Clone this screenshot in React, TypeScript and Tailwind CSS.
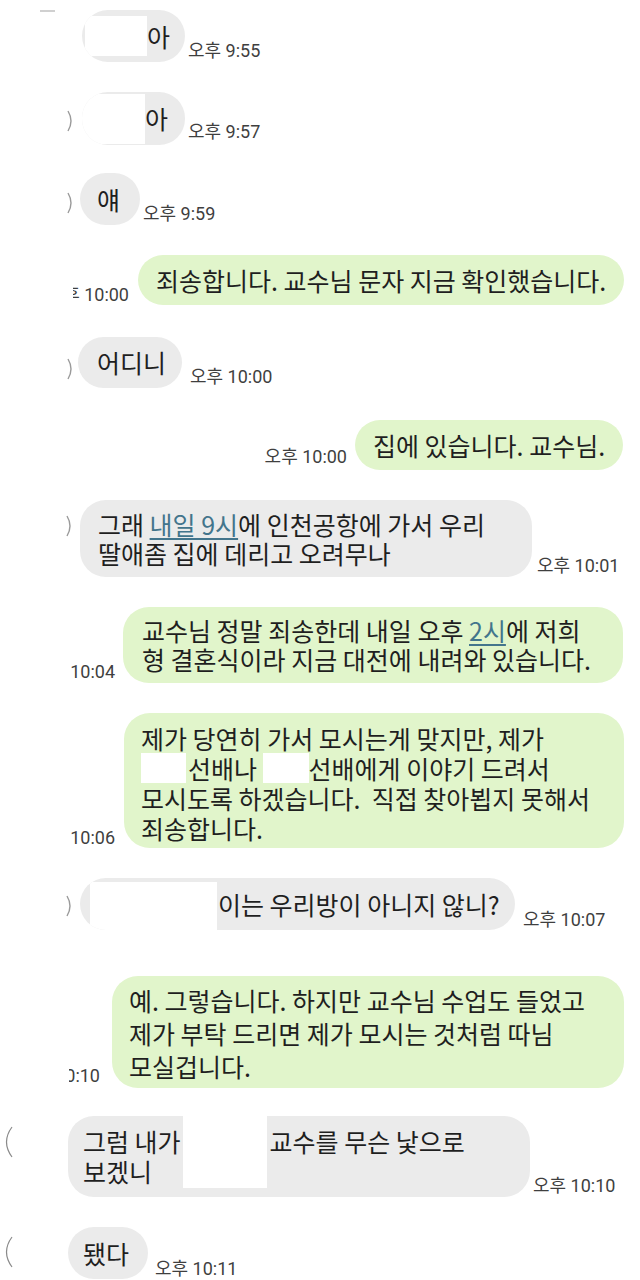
import React from 'react';

// small arc left over from the cropped avatar circles
function Paren({ open = false, className = '' }: { open?: boolean; className?: string }) {
  if (open) {
    return (
      <svg width="12" height="32" viewBox="0 0 12 32" className={className}>
        <path d="M10 1 Q-1 16 10 31" fill="none" stroke="#8a8a8a" strokeWidth="1.2" />
      </svg>
    );
  }
  return (
    <svg width="8" height="22" viewBox="0 0 8 22" className={className}>
      <path d="M2 1 Q8 11 2 21" fill="none" stroke="#9a9a9a" strokeWidth="1.4" />
    </svg>
  );
}

function Time({ children, className = '' }: { children: React.ReactNode; className?: string }) {
  return (
    <span
      className={
        "whitespace-nowrap text-[18px] leading-[20px] text-[#3f3f3f] font-['Roboto','Noto_Sans_CJK_KR',sans-serif] " +
        className
      }
    >
      {children}
    </span>
  );
}

// time stamp cut off by the left edge of the screenshot
function ClippedTime({ children, className = '' }: { children: React.ReactNode; className?: string }) {
  return (
    <span className={'flex justify-end overflow-hidden ' + className}>
      <Time>{children}</Time>
    </span>
  );
}

function Link({ children }: { children: React.ReactNode }) {
  return <span className="text-[#43758c] underline underline-offset-[3px] decoration-[1.5px]">{children}</span>;
}

export default function App() {
  return (
    <div className="w-[640px] h-[1280px] overflow-hidden bg-white text-[#1f1f1f] font-['Noto_Sans_CJK_KR',sans-serif]">
      {/* 9:55 */}
      <div className="flex items-end pt-[10px] pl-[40px]">
        <span className="self-start w-[15px] h-[2px] bg-[#d0d0d0]" />
        <div className="ml-[27px] flex items-center h-[52px] w-[103px] pl-[3px] rounded-[26px] bg-[#ebebeb] overflow-hidden">
          <span className="w-[62px] h-[40px] bg-white" />
          <span className="text-[25px] leading-[29px]">아</span>
        </div>
        <Time className="ml-[3px] mb-[1px]">오후 9:55</Time>
      </div>

      {/* 9:57 */}
      <div className="flex items-end mt-[30px] pl-[66px]">
        <Paren className="self-start mt-[18px]" />
        <div className="ml-[8px] flex items-center h-[53px] w-[103px] rounded-[26px] bg-[#ebebeb] overflow-hidden">
          <span className="w-[63px] h-[50px] bg-white" />
          <span className="text-[25px] leading-[29px]">아</span>
        </div>
        <Time className="ml-[3px] mb-[3px]">오후 9:57</Time>
      </div>

      {/* 9:59 */}
      <div className="flex items-end mt-[28px] pl-[66px]">
        <Paren className="self-start mt-[19px]" />
        <div className="ml-[6px] flex items-center h-[52px] w-[60px] pl-[17px] rounded-[26px] bg-[#ebebeb]">
          <span className="text-[25px] leading-[29px]">얘</span>
        </div>
        <Time className="ml-[3px] mb-[1px]">오후 9:59</Time>
      </div>

      {/* 10:00 sent */}
      <div className="flex items-end justify-end mt-[30px] pr-[16px]">
        <ClippedTime className="w-[56px] mr-[9px]">오후 10:00</ClippedTime>
        <div className="flex items-center h-[50px] w-[486px] pl-[18px] rounded-[25px] bg-[#e1f5cb]">
          <span className="whitespace-nowrap text-[25px] leading-[29px]">죄송합니다. 교수님 문자 지금 확인했습니다.</span>
        </div>
      </div>

      {/* 10:00 received */}
      <div className="flex items-end mt-[32px] pl-[66px]">
        <Paren className="self-start mt-[21px]" />
        <div className="ml-[4px] flex items-center h-[51px] w-[104px] pl-[19px] rounded-[26px] bg-[#ebebeb]">
          <span className="whitespace-nowrap text-[25px] leading-[29px]">어디니</span>
        </div>
        <Time className="ml-[8px] mb-[1px]">오후 10:00</Time>
      </div>

      {/* 10:00 sent */}
      <div className="flex items-end justify-end mt-[32px] pr-[17px]">
        <Time className="mr-[8px] mb-[3px]">오후 10:00</Time>
        <div className="flex items-center h-[50px] w-[268px] pl-[18px] rounded-[25px] bg-[#e1f5cb]">
          <span className="whitespace-nowrap text-[25px] leading-[29px]">집에 있습니다. 교수님.</span>
        </div>
      </div>

      {/* 10:01 */}
      <div className="flex items-end mt-[30px] pl-[65px]">
        <Paren className="self-start mt-[15px]" />
        <div className="ml-[7px] w-[452px] pl-[18px] pt-[10px] pb-[9px] rounded-[26px] bg-[#ebebeb] text-[25px] leading-[29px] whitespace-nowrap">
          <div>
            그래 <Link>내일 9시</Link>에 인천공항에 가서 우리
          </div>
          <div>딸애좀 집에 데리고 오려무나</div>
        </div>
        <Time className="ml-[5px] mb-[1px]">오후 10:01</Time>
      </div>

      {/* 10:04 */}
      <div className="flex items-end justify-end mt-[30px] pr-[17px]">
        <Time className="mr-[8px] mb-[1px]">10:04</Time>
        <div className="w-[500px] pl-[19px] pt-[9px] pb-[9px] rounded-[26px] bg-[#e1f5cb] text-[25px] leading-[29px] whitespace-nowrap">
          <div>
            교수님 정말 죄송한데 내일 오후 <Link>2시</Link>에 저희
          </div>
          <div>형 결혼식이라 지금 대전에 내려와 있습니다.</div>
        </div>
      </div>

      {/* 10:06 */}
      <div className="flex items-end justify-end mt-[30px] pr-[16px]">
        <Time className="mr-[9px] mb-[0px]">10:06</Time>
        <div className="w-[500px] pl-[17px] pt-[10px] pb-[5px] rounded-[26px] bg-[#e1f5cb] text-[25px] leading-[30px] whitespace-pre">
          <div>제가 당연히 가서 모시는게 맞지만, 제가</div>
          <div className="flex items-center h-[30px]">
            <span className="w-[45px] h-[30px] bg-white" />
            <span className="ml-[2px]">선배나 </span>
            <span className="w-[46px] h-[30px] bg-white" />
            <span>선배에게 이야기 드려서</span>
          </div>
          <div>모시도록 하겠습니다.  직접 찾아뵙지 못해서</div>
          <div>죄송합니다.</div>
        </div>
      </div>

      {/* 10:07 */}
      <div className="flex items-end mt-[30px] pl-[65px]">
        <Paren className="self-start mt-[17px]" />
        <div className="ml-[7px] flex items-center h-[52px] w-[435px] pl-[10px] rounded-[26px] bg-[#ebebeb] overflow-hidden">
          <span className="self-end w-[127px] h-[48px] bg-white" />
          <span className="ml-[1px] whitespace-nowrap text-[25px] leading-[29px]">이는 우리방이 아니지 않니?</span>
        </div>
        <Time className="ml-[8px] mb-[0px]">오후 10:07</Time>
      </div>

      {/* 10:10 sent */}
      <div className="flex items-end justify-end mt-[46px] pr-[16px]">
        <ClippedTime className="w-[31px] mr-[12px] mb-[2px]">오후 10:10</ClippedTime>
        <div className="w-[512px] pl-[17px] pt-[8px] pb-[5px] rounded-[26px] bg-[#e1f5cb] text-[25px] leading-[33px] whitespace-nowrap">
          <div>예. 그렇습니다. 하지만 교수님 수업도 들었고</div>
          <div>제가 부탁 드리면 제가 모시는 것처럼 따님</div>
          <div>모실겁니다.</div>
        </div>
      </div>

      {/* 10:10 received */}
      <div className="flex items-end mt-[28px] pl-[2px]">
        <Paren open className="self-start mt-[10px]" />
        <div className="ml-[54px] flex w-[462px] pl-[15px] pt-[10px] pb-[9px] rounded-[26px] bg-[#ebebeb] text-[25px] leading-[30px] whitespace-nowrap">
          <div>
            <div>그럼 내가</div>
            <div>보겠니</div>
          </div>
          <span className="ml-[2px] -mt-[10px] w-[84px] h-[72px] bg-white" />
          <div className="ml-[3px]">교수를 무슨 낯으로</div>
        </div>
        <Time className="ml-[3px] mb-[1px]">오후 10:10</Time>
      </div>

      {/* 10:11 */}
      <div className="flex items-end mt-[30px] pl-[2px]">
        <Paren open className="self-start mt-[9px]" />
        <div className="ml-[54px] flex items-center h-[52px] w-[80px] pl-[15px] rounded-[26px] bg-[#ebebeb]">
          <span className="whitespace-nowrap text-[25px] leading-[29px]">됐다</span>
        </div>
        <Time className="ml-[7px] mb-[0px]">오후 10:11</Time>
      </div>
    </div>
  );
}
